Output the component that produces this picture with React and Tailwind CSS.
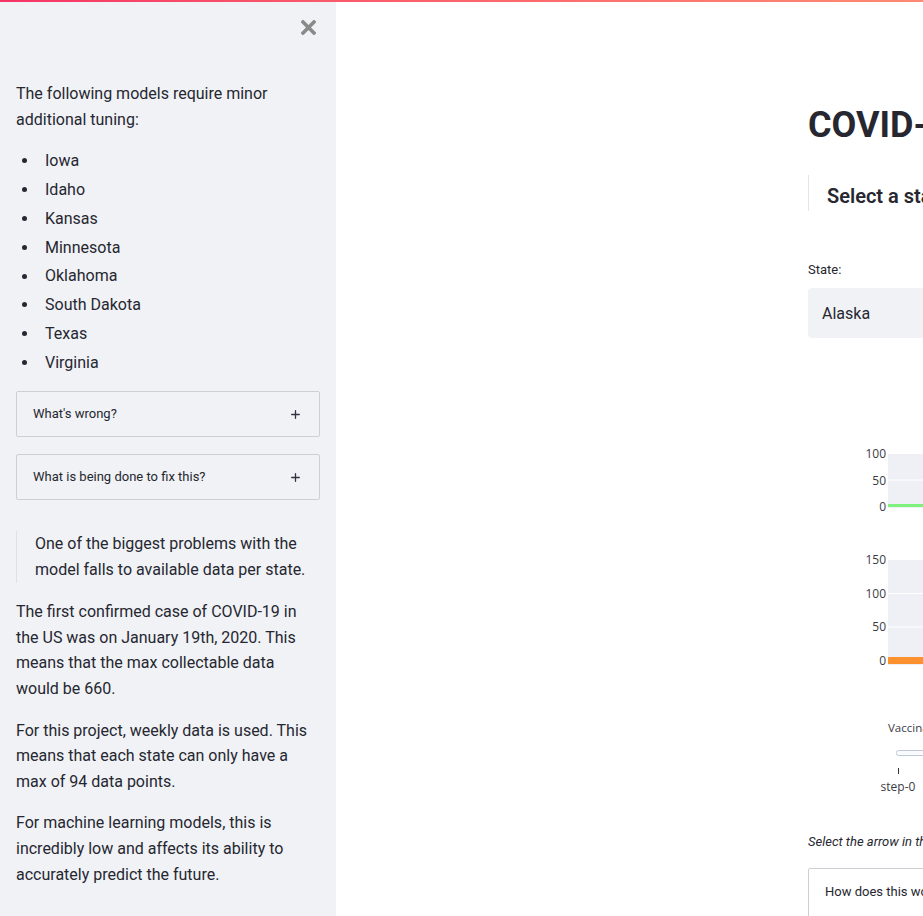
import { Plus } from 'lucide-react';

const states = ['Iowa', 'Idaho', 'Kansas', 'Minnesota', 'Oklahoma', 'South Dakota', 'Texas', 'Virginia'];

const Expander = ({ label }) => (
    <div className="h-[46px] border border-[#cdcfd4] rounded-[2px] flex items-center justify-between pl-4 pr-[17px]">
        <span className="text-[13px] text-[#262730]">{label}</span>
        <Plus size={13} strokeWidth={2.4} className="text-[#31333f]" />
    </div>
);

const Chart = () => (
    <svg width="700" height="360" className="block" style={{ fontFamily: '"Open Sans", sans-serif' }}>
        {/* top subplot */}
        <rect x="80" y="14" width="620" height="54" fill="#eef0f5" />
        <line x1="80" x2="700" y1="40" y2="40" stroke="#ffffff" strokeWidth="1" />
        <line x1="80" x2="700" y1="65.5" y2="65.5" stroke="#7ef27c" strokeWidth="3" />
        <text x="78" y="18" textAnchor="end" fontSize="12" fill="#3a3b45">100</text>
        <text x="78" y="45" textAnchor="end" fontSize="12" fill="#3a3b45">50</text>
        <text x="78" y="71" textAnchor="end" fontSize="12" fill="#3a3b45">0</text>

        {/* bottom subplot */}
        <rect x="80" y="120" width="620" height="105" fill="#eef0f5" />
        <line x1="80" x2="700" y1="153.5" y2="153.5" stroke="#ffffff" strokeWidth="1" />
        <line x1="80" x2="700" y1="187" y2="187" stroke="#ffffff" strokeWidth="1" />
        <rect x="80" y="217" width="620" height="7" fill="#fd912f" />
        <text x="78" y="124" textAnchor="end" fontSize="12" fill="#3a3b45">150</text>
        <text x="78" y="158" textAnchor="end" fontSize="12" fill="#3a3b45">100</text>
        <text x="78" y="191" textAnchor="end" fontSize="12" fill="#3a3b45">50</text>
        <text x="78" y="225" textAnchor="end" fontSize="12" fill="#3a3b45">0</text>

        {/* slider */}
        <text x="80" y="292" fontSize="11.5" fill="#3a3b45">Vaccinations: step-0</text>
        <rect x="88.5" y="310.5" width="600" height="5" rx="2" fill="#f8fafc" stroke="#bec8d9" />
        <line x1="90.5" x2="90.5" y1="328" y2="334" stroke="#333" strokeWidth="1" />
        <text x="90" y="351" textAnchor="middle" fontSize="12" fill="#3a3b45">step-0</text>
    </svg>
);

const App = () => {
    return (
        <div className="relative w-[923px] h-[916px] overflow-hidden bg-white text-[#262730]" style={{ fontFamily: 'Roboto, "Liberation Sans", sans-serif' }}>
            <div className="absolute top-0 left-0 right-0 h-[2px] bg-gradient-to-r from-[#f63366] to-[#fd8a72] z-10" />
            <div className="flex h-full">
                {/* sidebar */}
                <aside className="w-[336px] shrink-0 h-full bg-[#f0f2f6] px-4">
                    <div className="flex justify-end pt-[20px] pr-[4px]">
                        <svg width="15" height="15" viewBox="0 0 15 15" className="text-[#8a8a8a]">
                            <path d="M2 2 L13 13 M13 2 L2 13" stroke="currentColor" strokeWidth="3.6" strokeLinecap="square" />
                        </svg>
                    </div>
                    <div className="mt-[46px] text-[16px] leading-[25.6px]">
                        <p className="mb-4">The following models require minor additional tuning:</p>
                        <ul className="mb-4">
                            {states.map((s) => (
                                <li key={s} className="mb-[3.2px] flex items-center">
                                    <span className="w-[5px] h-[5px] rounded-full bg-[#262730] ml-[6px] mr-[18px]" />
                                    {s}
                                </li>
                            ))}
                        </ul>
                        <Expander label="What's wrong?" />
                        <div className="h-[17px]" />
                        <Expander label="What is being done to fix this?" />
                        <div className="mt-[31px] border-l border-[#dfe1e5] pl-[18px] leading-[26px]">
                            One of the biggest problems with the model falls to available data per state.
                        </div>
                        <p className="mt-4">The first confirmed case of COVID-19 in the US was on January 19th, 2020. This means that the max collectable data would be 660.</p>
                        <p className="mt-4">For this project, weekly data is used. This means that each state can only have a max of 94 data points.</p>
                        <p className="mt-4">For machine learning models, this is incredibly low and affects its ability to accurately predict the future.</p>
                    </div>
                </aside>

                {/* main */}
                <main className="flex-1 h-full overflow-hidden">
                    <div className="ml-[472px] w-[700px] pt-[104px] flex flex-col">
                        <h1 className="text-[36px] leading-[43px] font-bold whitespace-nowrap">COVID-19 Vaccination Forecast</h1>
                        <div className="mt-[28px] h-[36px] border-l border-[#e4e5e8] pl-[18px]">
                            <div className="mt-[6px] text-[20px] leading-[30px] font-semibold whitespace-nowrap">Select a state to view its vaccination forecast</div>
                        </div>
                        <label className="mt-[51px] text-[13px] leading-[16px]">State:</label>
                        <div className="mt-[10px] h-[50px] bg-[#f0f2f6] rounded-[4px] flex items-center pl-[14px] pt-[1px] text-[16px]">Alaska</div>
                        <div className="mt-[102px]">
                            <Chart />
                        </div>
                        <p className="mt-[32px] text-[13px] leading-[20px] italic whitespace-nowrap">Select the arrow in the slider above to play the animation over time.</p>
                        <div className="mt-[16px] h-[60px] border border-[#cdcfd4] rounded-[2px] pl-4 pt-[13px] text-[13px]">How does this work?</div>
                    </div>
                </main>
            </div>
        </div>
    );
};

export default App;
